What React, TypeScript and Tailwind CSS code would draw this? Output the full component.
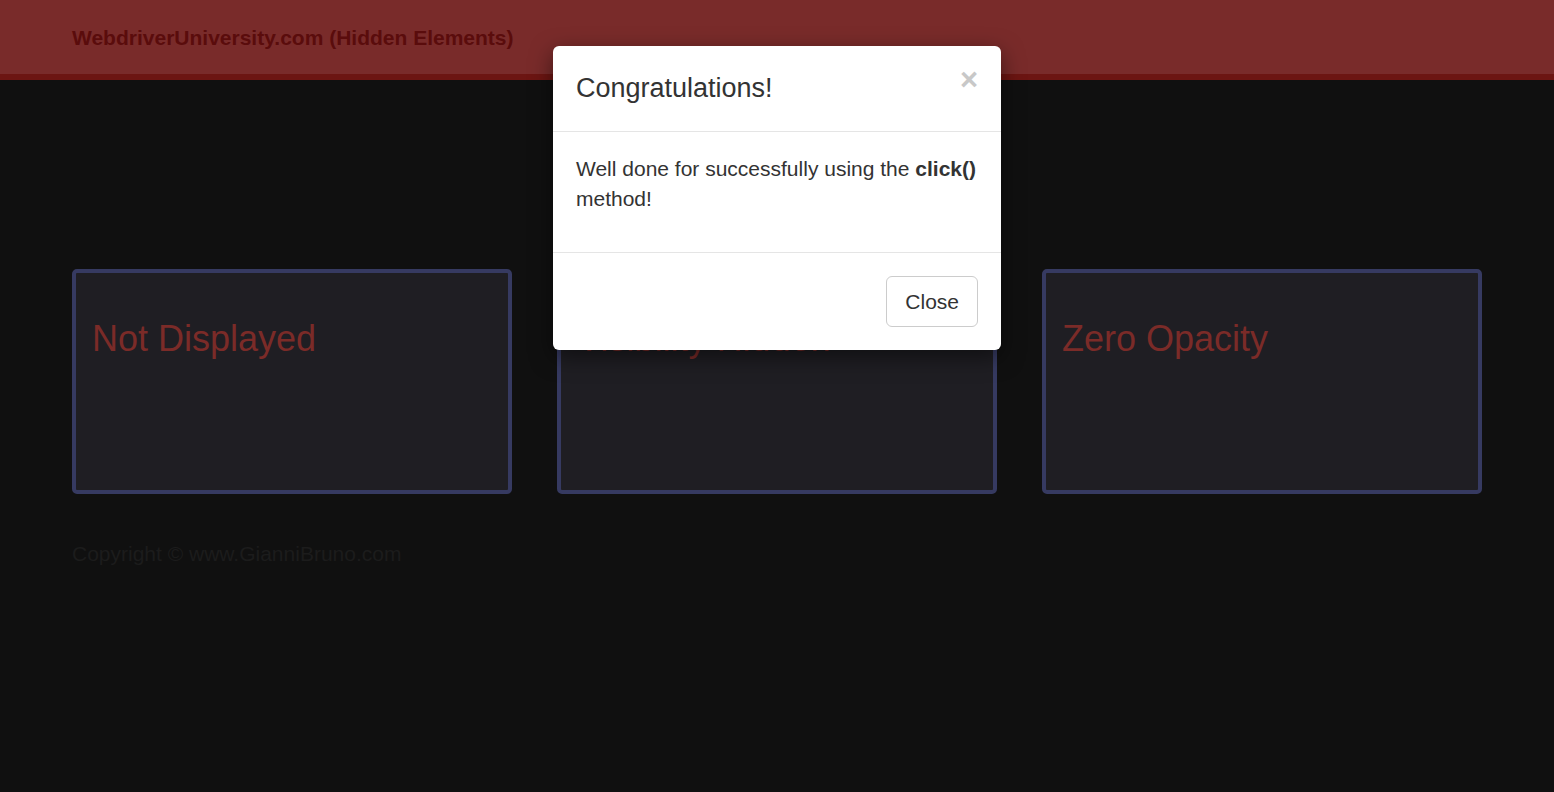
import { ReactElement } from "react";

const cards = ["Not Displayed", "Visibility Hidden", "Zero Opacity"];

function Card({ title }: { title: string }): ReactElement {
  return (
    <div className="h-[225px] rounded-[5px] border-4 border-[#363a61] bg-[#1f1e23] px-4 pt-[46px]">
      <h2 className="text-[36px] leading-[1.1] text-[#7b2b28]">{title}</h2>
    </div>
  );
}

function Modal(): ReactElement {
  return (
    <div className="absolute left-[553px] top-[46px] w-[448px] rounded-[6px] bg-white text-[#333] shadow-[0_7px_22px_rgba(0,0,0,0.5)]">
      <div className="flex items-start justify-between border-b border-[#e5e5e5] px-[23px] pt-[23px] pb-[23px]">
        <h4 className="text-[27px] leading-[39px]">Congratulations!</h4>
        <button className="mt-[-5px] text-[31px] font-bold leading-none text-[#c8c8c8]">×</button>
      </div>
      <div className="px-[23px] pt-[22px] pb-[23px]">
        <p className="mb-[15px] text-[21px] leading-[30px]">
          Well done for successfully using the <b>click()</b> method!
        </p>
      </div>
      <div className="flex justify-end border-t border-[#e5e5e5] px-[23px] pt-[23px] pb-[23px]">
        <button className="h-[51px] rounded-[6px] border border-[#ccc] bg-white px-[18px] text-[21px] text-[#333]">
          Close
        </button>
      </div>
    </div>
  );
}

export default function App(): ReactElement {
  return (
    <div
      className="relative min-h-[792px] bg-[#101010]"
      style={{ fontFamily: '"Liberation Sans", Arial, sans-serif' }}
    >
      <div className="h-[80px] border-b-[6px] border-[#6c1512] bg-[#792b2a]">
        <div className="mx-auto w-[1410px] pt-[24px]">
          <span className="text-[21px] font-bold leading-[28px] text-[#5a0c0c]">
            WebdriverUniversity.com (Hidden Elements)
          </span>
        </div>
      </div>
      <div className="mx-auto w-[1410px] pt-[189px]">
        <div className="grid grid-cols-3 gap-[45px]">
          {cards.map((c) => (
            <Card key={c} title={c} />
          ))}
        </div>
        <p className="mt-[45px] text-[21px] leading-[30px] text-[#1c1c1c]">
          Copyright © www.GianniBruno.com
        </p>
      </div>
      <Modal />
    </div>
  );
}
